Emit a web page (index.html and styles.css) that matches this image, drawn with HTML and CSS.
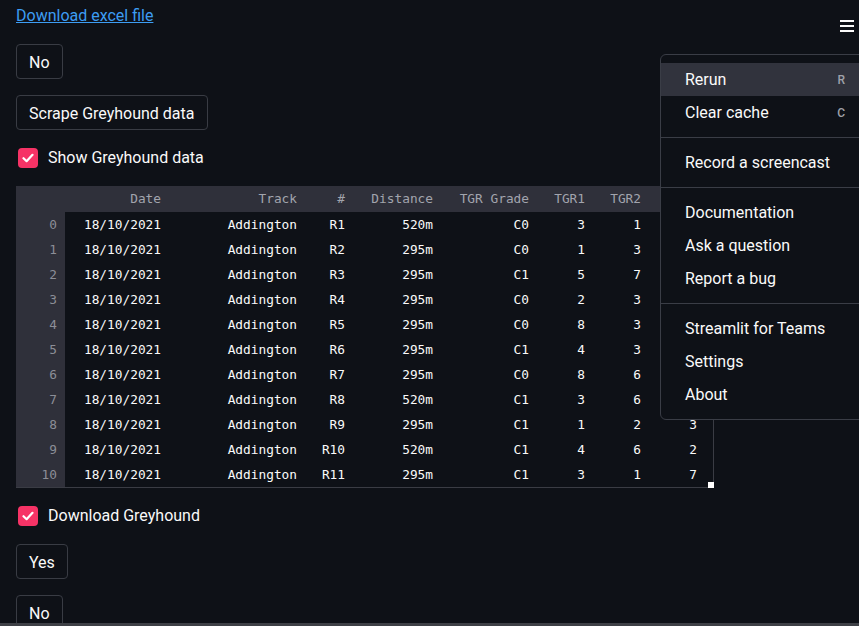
FILE: index.html
```html
<!DOCTYPE html>
<html>
<head>
<meta charset="utf-8">
<link rel="stylesheet" href="styles.css">
</head>
<body>
<div class="toolbar">
  <svg class="burger" width="16" height="14" viewBox="0 0 16 14"><rect x="1" y="1" width="14" height="2" fill="#fafafa"/><rect x="1" y="6" width="14" height="2" fill="#fafafa"/><rect x="1" y="11" width="14" height="2" fill="#fafafa"/></svg>
</div>
<main class="main">
  <p class="linkrow"><a href="#" class="link">Download excel file</a></p>
  <div><button class="btn">No</button></div>
  <div><button class="btn">Scrape Greyhound data</button></div>
  <label class="check"><span class="box"><svg width="12" height="10" viewBox="0 0 12 10"><path d="M1.5 5.2 L4.6 8.2 L10.5 1.8" fill="none" stroke="#fff" stroke-width="2.2" stroke-linecap="round" stroke-linejoin="round"/></svg></span>Show Greyhound data</label>
  <div class="frame">
    <table class="df">
      <colgroup>
        <col class="c-idx"><col class="c-date"><col class="c-track"><col class="c-num"><col class="c-dist"><col class="c-grade"><col class="c-n"><col class="c-n"><col class="c-n">
      </colgroup>
      <thead>
        <tr><th></th><th>Date</th><th>Track</th><th>#</th><th>Distance</th><th>TGR Grade</th><th>TGR1</th><th>TGR2</th><th>TGR3</th></tr>
      </thead>
      <tbody>
        <tr><th>0</th><td>18/10/2021</td><td>Addington</td><td>R1</td><td>520m</td><td>C0</td><td>3</td><td>1</td><td>5</td></tr>
        <tr><th>1</th><td>18/10/2021</td><td>Addington</td><td>R2</td><td>295m</td><td>C0</td><td>1</td><td>3</td><td>6</td></tr>
        <tr><th>2</th><td>18/10/2021</td><td>Addington</td><td>R3</td><td>295m</td><td>C1</td><td>5</td><td>7</td><td>2</td></tr>
        <tr><th>3</th><td>18/10/2021</td><td>Addington</td><td>R4</td><td>295m</td><td>C0</td><td>2</td><td>3</td><td>8</td></tr>
        <tr><th>4</th><td>18/10/2021</td><td>Addington</td><td>R5</td><td>295m</td><td>C0</td><td>8</td><td>3</td><td>1</td></tr>
        <tr><th>5</th><td>18/10/2021</td><td>Addington</td><td>R6</td><td>295m</td><td>C1</td><td>4</td><td>3</td><td>6</td></tr>
        <tr><th>6</th><td>18/10/2021</td><td>Addington</td><td>R7</td><td>295m</td><td>C0</td><td>8</td><td>6</td><td>4</td></tr>
        <tr><th>7</th><td>18/10/2021</td><td>Addington</td><td>R8</td><td>520m</td><td>C1</td><td>3</td><td>6</td><td>1</td></tr>
        <tr><th>8</th><td>18/10/2021</td><td>Addington</td><td>R9</td><td>295m</td><td>C1</td><td>1</td><td>2</td><td>3</td></tr>
        <tr><th>9</th><td>18/10/2021</td><td>Addington</td><td>R10</td><td>520m</td><td>C1</td><td>4</td><td>6</td><td>2</td></tr>
        <tr><th>10</th><td>18/10/2021</td><td>Addington</td><td>R11</td><td>295m</td><td>C1</td><td>3</td><td>1</td><td>7</td></tr>
      </tbody>
    </table>
    <span class="handle"></span>
  </div>
  <label class="check"><span class="box"><svg width="12" height="10" viewBox="0 0 12 10"><path d="M1.5 5.2 L4.6 8.2 L10.5 1.8" fill="none" stroke="#fff" stroke-width="2.2" stroke-linecap="round" stroke-linejoin="round"/></svg></span>Download Greyhound</label>
  <div><button class="btn">Yes</button></div>
  <div><button class="btn">No</button></div>
</main>

<nav class="menu">
  <ul class="menu-group">
    <li class="item active"><span>Rerun</span><span class="key">R</span></li>
    <li class="item"><span>Clear cache</span><span class="key">C</span></li>
  </ul>
  <ul class="menu-group">
    <li class="item"><span>Record a screencast</span></li>
  </ul>
  <ul class="menu-group">
    <li class="item"><span>Documentation</span></li>
    <li class="item"><span>Ask a question</span></li>
    <li class="item"><span>Report a bug</span></li>
  </ul>
  <ul class="menu-group">
    <li class="item"><span>Streamlit for Teams</span></li>
    <li class="item"><span>Settings</span></li>
    <li class="item"><span>About</span></li>
  </ul>
</nav>
<div class="bottombar"></div>
</body>
</html>
```
FILE: styles.css
```css
html, body {
  margin: 0;
  padding: 0;
  background: #0e1117;
  color: #fafafa;
  font-family: Roboto, "Noto Sans", sans-serif;
  font-size: 16px;
  overflow: hidden;
  height: 626px;
}

.toolbar {
  position: absolute;
  top: 0;
  right: 0;
  height: 40px;
  padding: 19px 4px 0 0;
  box-sizing: border-box;
}
.burger { display: block; }

.main {
  display: flex;
  flex-direction: column;
  gap: 16px;
  padding: 2px 16px 0 16px;
  align-items: flex-start;
}

.linkrow {
  margin: 0;
  line-height: 26px;
  padding-top: 1px;
  height: 26px;
  box-sizing: border-box;
}
.link {
  color: #3d9df3;
  text-decoration: underline;
}

.btn {
  font-family: inherit;
  font-size: 16px;
  color: #fafafa;
  background: #0e1117;
  border: 1px solid #393c44;
  border-radius: 4px;
  padding: 5px 12px 3px;
  line-height: 25px;
  height: 35px;
  box-sizing: border-box;
  cursor: pointer;
}

.check {
  display: flex;
  align-items: center;
  gap: 10px;
  height: 24px;
  padding-left: 2px;
  line-height: 26px;
}
.box {
  width: 20px;
  height: 20px;
  border-radius: 4px;
  background: #f63366;
  display: flex;
  align-items: center;
  justify-content: center;
}

.frame {
  position: relative;
  width: 697px;
  border-right: 1px solid #3a3c44;
  border-bottom: 1px solid #3a3c44;
}
.handle {
  position: absolute;
  right: -1px;
  bottom: -1px;
  width: 6px;
  height: 6px;
  background: #ffffff;
}

.df {
  border-collapse: collapse;
  table-layout: fixed;
  width: 696px;
  font-family: "DejaVu Sans Mono", "Liberation Mono", monospace;
  font-size: 12.8px;
  line-height: 16px;
}
.c-idx { width: 49px; }
.c-date { width: 112px; }
.c-track { width: 136px; }
.c-num { width: 48px; }
.c-dist { width: 88px; }
.c-grade { width: 96px; }
.c-n { width: 56px; }

.df thead tr { height: 26px; }
.df tbody tr { height: 25px; }

.df thead th {
  background: #2f303a;
  color: #a2a4ad;
  font-weight: normal;
  text-align: right;
  padding: 0 16px 0 0;
  white-space: nowrap;
}
.df tbody th {
  background: #2f303a;
  color: #8c8e97;
  font-weight: normal;
  text-align: right;
  padding: 0 8px 0 0;
}
.df td {
  padding: 0 16px 0 0;
  text-align: right;
  color: #fafafa;
  white-space: nowrap;
}

.menu {
  position: absolute;
  top: 54px;
  left: 660px;
  width: 230px;
  background: #0e1117;
  border: 1px solid #3a3d46;
  border-radius: 6px;
  padding: 8px 0;
  font-size: 16px;
}
.menu-group {
  list-style: none;
  margin: 0;
  padding: 0;
}
.menu-group + .menu-group {
  border-top: 1px solid #3a3d46;
  margin-top: 8px;
  padding-top: 8px;
}
.item {
  display: flex;
  justify-content: space-between;
  align-items: center;
  height: 33px;
  padding: 0 46px 0 24px;
}
.item.active { background: #31333d; }
.key {
  font-size: 12px;
  font-weight: 500;
  color: #9fa1a9;
}

.bottombar {
  position: fixed;
  left: 0;
  right: 0;
  bottom: 0;
  height: 3px;
  background: #3e4046;
}
```
